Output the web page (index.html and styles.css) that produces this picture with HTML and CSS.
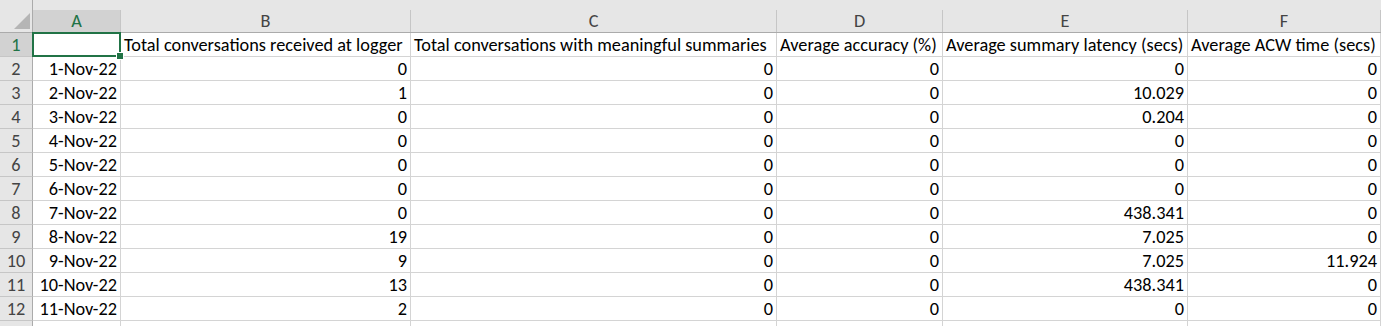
FILE: index.html
```html
<!DOCTYPE html>
<html>
<head>
<meta charset="utf-8">
<link rel="stylesheet" href="styles.css">
</head>
<body>
<div class="sheet">
  <div class="corner"><span class="tri"></span></div>
  <div class="colhead sel"><span>A</span></div>
  <div class="colhead"><span>B</span></div>
  <div class="colhead"><span>C</span></div>
  <div class="colhead"><span>D</span></div>
  <div class="colhead"><span>E</span></div>
  <div class="colhead last"><span>F</span></div>

  <div class="rowhead sel">1</div>
  <div class="cell a1"><span class="handle"></span></div>
  <div class="cell txt">Total conversations received at logger</div>
  <div class="cell txt">Total conversations with meaningful summaries</div>
  <div class="cell txt">Average accuracy (%)</div>
  <div class="cell txt">Average summary latency (secs)</div>
  <div class="cell txt">Average ACW time (secs)</div>

  <div class="rowhead">2</div><div class="cell">1-Nov-22</div><div class="cell">0</div><div class="cell">0</div><div class="cell">0</div><div class="cell">0</div><div class="cell">0</div>
  <div class="rowhead">3</div><div class="cell">2-Nov-22</div><div class="cell">1</div><div class="cell">0</div><div class="cell">0</div><div class="cell">10.029</div><div class="cell">0</div>
  <div class="rowhead">4</div><div class="cell">3-Nov-22</div><div class="cell">0</div><div class="cell">0</div><div class="cell">0</div><div class="cell">0.204</div><div class="cell">0</div>
  <div class="rowhead">5</div><div class="cell">4-Nov-22</div><div class="cell">0</div><div class="cell">0</div><div class="cell">0</div><div class="cell">0</div><div class="cell">0</div>
  <div class="rowhead">6</div><div class="cell">5-Nov-22</div><div class="cell">0</div><div class="cell">0</div><div class="cell">0</div><div class="cell">0</div><div class="cell">0</div>
  <div class="rowhead">7</div><div class="cell">6-Nov-22</div><div class="cell">0</div><div class="cell">0</div><div class="cell">0</div><div class="cell">0</div><div class="cell">0</div>
  <div class="rowhead">8</div><div class="cell">7-Nov-22</div><div class="cell">0</div><div class="cell">0</div><div class="cell">0</div><div class="cell">438.341</div><div class="cell">0</div>
  <div class="rowhead">9</div><div class="cell">8-Nov-22</div><div class="cell">19</div><div class="cell">0</div><div class="cell">0</div><div class="cell">7.025</div><div class="cell">0</div>
  <div class="rowhead">10</div><div class="cell">9-Nov-22</div><div class="cell">9</div><div class="cell">0</div><div class="cell">0</div><div class="cell">7.025</div><div class="cell">11.924</div>
  <div class="rowhead">11</div><div class="cell">10-Nov-22</div><div class="cell">13</div><div class="cell">0</div><div class="cell">0</div><div class="cell">438.341</div><div class="cell">0</div>
  <div class="rowhead">12</div><div class="cell">11-Nov-22</div><div class="cell">2</div><div class="cell">0</div><div class="cell">0</div><div class="cell">0</div><div class="cell">0</div>

  <div class="rowhead"></div><div class="cell"></div><div class="cell"></div><div class="cell"></div><div class="cell"></div><div class="cell"></div><div class="cell"></div>
</div>
</body>
</html>
```

FILE: styles.css
```css
html, body {
  margin: 0;
  padding: 0;
  background: #ffffff;
}

body {
  font-family: Carlito, Calibri, "Liberation Sans", sans-serif;
  font-size: 18.3px;
  color: #000000;
  overflow: hidden;
}

.sheet {
  display: grid;
  grid-template-columns: 33px 88px 290px 366px 166px 245px 193px;
  grid-template-rows: 33px repeat(13, 24px);
  width: 1384px;
  height: 326px;
  overflow: hidden;
}

.corner {
  background: #e6e6e6;
  border-right: 1px solid #ababab;
  border-bottom: 1px solid #ababab;
  display: flex;
  align-items: flex-end;
  justify-content: flex-end;
  padding: 0 2px 3px 0;
}

.tri {
  display: block;
  width: 0;
  height: 0;
  border-left: 16px solid transparent;
  border-bottom: 16px solid #b5b5b5;
}

.colhead {
  background: #e6e6e6;
  padding-top: 10px;
  border-bottom: 1px solid #ababab;
}

.colhead span {
  display: flex;
  align-items: center;
  justify-content: center;
  height: 22px;
  border-right: 1px solid #c6c6c6;
  color: #444444;
}

.colhead.sel span {
  background: #d2d2d2;
  color: #217346;
}

.rowhead {
  background: #e6e6e6;
  border-right: 1px solid #ababab;
  border-bottom: 1px solid #c6c6c6;
  display: flex;
  align-items: center;
  justify-content: center;
  color: #444444;
  padding-top: 1px;
}

.rowhead.sel {
  background: #d2d2d2;
  color: #217346;
}

.cell {
  border-right: 1px solid #d4d4d4;
  border-bottom: 1px solid #d4d4d4;
  display: flex;
  align-items: center;
  justify-content: flex-end;
  padding: 1px 3px 0 3px;
  white-space: nowrap;
  overflow: hidden;
}

.cell.txt {
  justify-content: flex-start;
  overflow: visible;
}

.a1 {
  position: relative;
  overflow: visible;
}

.a1::before {
  content: "";
  position: absolute;
  left: -1px;
  top: -1px;
  right: -1px;
  bottom: -1px;
  border: 2px solid #217346;
  pointer-events: none;
}

.handle {
  position: absolute;
  right: -4px;
  bottom: -4px;
  width: 6px;
  height: 6px;
  background: #217346;
  border: 1px solid #ffffff;
  z-index: 2;
}
```
